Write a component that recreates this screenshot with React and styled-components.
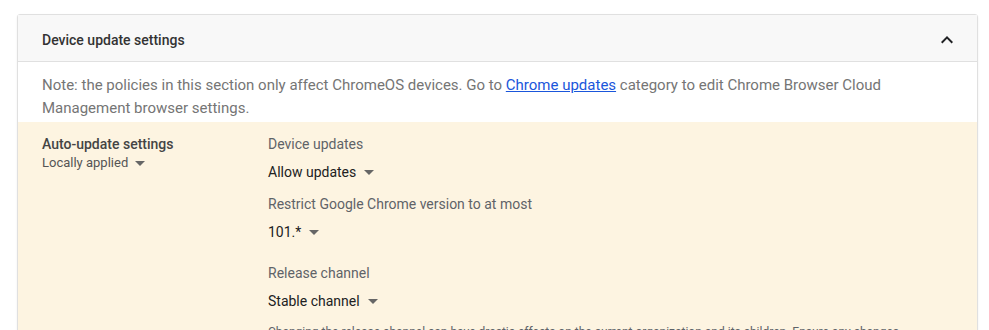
import styled, { createGlobalStyle } from "styled-components";

const GlobalStyle = createGlobalStyle`
  body {
    margin: 0;
    background: #fff;
    font-family: Roboto, "Liberation Sans", sans-serif;
  }
`;

const Page = styled.div`
  padding: 14px 11px 0 17px;
  height: 330px;
  box-sizing: border-box;
  overflow: hidden;
`;

const Card = styled.div`
  border: 1px solid #e0e0e0;
  border-radius: 3px;
  box-shadow: 0 1px 2px rgba(0, 0, 0, 0.08);
  background: #fff;
`;

const CardHeader = styled.div`
  display: flex;
  align-items: center;
  justify-content: space-between;
  box-sizing: border-box;
  height: 47px;
  padding: 4px 18px 0 24px;
  background: #f8f8f8;
  border-bottom: 1px solid #e0e0e0;
  font-size: 14px;
  font-weight: 500;
  color: #333;
`;

const Note = styled.div`
  padding: 12px 70px 2px 24px;
  font-size: 15px;
  line-height: 23px;
  color: #757575;
  a {
    color: #1a56db;
    text-decoration: underline;
  }
`;

const Setting = styled.div`
  display: grid;
  grid-template-columns: 226px 640px;
  padding: 12px 24px 40px 24px;
  background: #fdf4e1;
`;

const SettingName = styled.div`
  font-size: 14px;
  font-weight: 500;
  line-height: 20px;
  color: #444;
`;

const Inherited = styled.div`
  display: flex;
  align-items: center;
  gap: 7px;
  font-size: 13px;
  line-height: 18px;
  color: #555;
`;

const Fields = styled.div`
  display: flex;
  flex-direction: column;
`;

const Field = styled.div`
  margin-bottom: ${(p) => p.$gap}px;
`;

const Label = styled.div`
  font-size: 14px;
  line-height: 20px;
  color: #5f6368;
`;

const Value = styled.div`
  display: flex;
  align-items: center;
  gap: 8px;
  margin-top: 8px;
  font-size: 14px;
  line-height: 20px;
  color: #212121;
`;

const Caret = styled.span`
  width: 0;
  height: 0;
  border-left: 5px solid transparent;
  border-right: 5px solid transparent;
  border-top: 5px solid #666;
`;

const Help = styled.div`
  margin-top: 13px;
  font-size: 12px;
  line-height: 16px;
  color: #5f6368;
`;

const fields = [
  { label: "Device updates", value: "Allow updates", gap: 12 },
  { label: "Restrict Google Chrome version to at most", value: "101.*", gap: 21 },
  { label: "Release channel", value: "Stable channel", gap: 0 },
];

export default function App() {
  return (
    <Page>
      <GlobalStyle />
      <Card>
        <CardHeader>
          <span>Device update settings</span>
          <svg width="24" height="24" viewBox="0 0 24 24">
            <path d="M12 8l-6 6 1.41 1.41L12 10.83l4.59 4.58L18 14z" fill="#202124" />
          </svg>
        </CardHeader>
        <Note>
          Note: the policies in this section only affect ChromeOS devices. Go to{" "}
          <a href="#">Chrome updates</a> category to edit Chrome Browser Cloud
          Management browser settings.
        </Note>
        <Setting>
          <div>
            <SettingName>Auto-update settings</SettingName>
            <Inherited>
              Locally applied <Caret />
            </Inherited>
          </div>
          <Fields>
            {fields.map((f) => (
              <Field key={f.label} $gap={f.gap}>
                <Label>{f.label}</Label>
                <Value>
                  {f.value} <Caret />
                </Value>
              </Field>
            ))}
            <Help>
              Changing the release channel can have drastic effects on the current
              organization and its children. Ensure any changes are tested before
              applying them broadly.
            </Help>
          </Fields>
        </Setting>
      </Card>
    </Page>
  );
}
